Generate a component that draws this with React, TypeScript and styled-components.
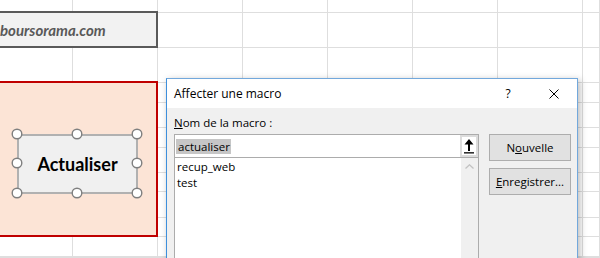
import styled, { createGlobalStyle } from 'styled-components';

const GlobalStyle = createGlobalStyle`
  html, body {
    margin: 0;
    padding: 0;
    background: #ffffff;
    overflow: hidden;
  }
  * {
    box-sizing: border-box;
  }
`;

const colWidths = [73, 85, 85, 85, 85, 85, 85, 17];
const rowHeights = [13, 35, 35, 20, 25, 20, 25, 19, 26, 19, 20, 1];

const Sheet = styled.div`
  position: relative;
  width: 600px;
  height: 258px;
  overflow: hidden;
  display: grid;
  grid-template-columns: ${colWidths.map(w => `${w}px`).join(' ')};
  grid-template-rows: ${rowHeights.map(h => `${h}px`).join(' ')};
  background: #ffffff;
`;

const Cell = styled.div`
  border-right: 1px solid #dedede;
  border-bottom: 1px solid #dedede;
`;

const TextBox = styled.div`
  position: absolute;
  left: -4px;
  top: 11px;
  width: 162px;
  height: 37px;
  border: 2px solid #5a5a5a;
  background: #f2f2f2;
  display: flex;
  align-items: center;
  padding: 1px 0 0 2px;
  font-family: Lato, 'Liberation Sans', sans-serif;
  font-weight: 700;
  font-style: italic;
  font-size: 15px;
  color: #595959;
`;

const RedZone = styled.div`
  position: absolute;
  left: -3px;
  top: 81px;
  width: 161px;
  height: 156px;
  border: 2px solid #c00000;
  background: #fce4d6;
`;

const MacroButton = styled.div`
  position: absolute;
  left: 17px;
  top: 134px;
  width: 121px;
  height: 60px;
  border: 2px solid #b1b1b1;
  background: #f0f0f0;
  display: flex;
  align-items: center;
  justify-content: center;
  font-family: Lato, 'Liberation Sans', sans-serif;
  font-weight: 700;
  font-size: 18px;
  color: #000000;
`;

const Handles = styled.svg`
  position: absolute;
  left: 10px;
  top: 127px;
  overflow: visible;
`;

const Dialog = styled.div`
  position: absolute;
  left: 166px;
  top: 78px;
  width: 412px;
  height: 200px;
  border: 1px solid #72a8dc;
  border-left-color: #3d8fdc;
  background: #f0f0f0;
  box-shadow: 2px 2px 7px rgba(0, 0, 0, 0.28);
  display: flex;
  flex-direction: column;
  font-family: 'Open Sans', 'Noto Sans', sans-serif;
  font-size: 11.5px;
  color: #000000;
`;

const TitleBar = styled.div`
  height: 29px;
  background: #ffffff;
  display: flex;
  align-items: center;
  padding-left: 7px;
`;

const Title = styled.div`
  flex: 1;
  font-size: 12px;
`;

const TitleButton = styled.div`
  width: 46px;
  height: 29px;
  display: flex;
  align-items: center;
  justify-content: center;
  font-size: 12px;
`;

const Body = styled.div`
  display: flex;
  gap: 10px;
  padding: 7px 6px 0 7px;
`;

const LeftCol = styled.div`
  width: 305px;
  display: flex;
  flex-direction: column;
`;

const Label = styled.div`
  height: 16px;
  line-height: 16px;
  margin-bottom: 3px;
`;

const InputRow = styled.div`
  height: 24px;
  border: 1px solid #acacac;
  background: #ffffff;
  display: flex;
  align-items: center;
`;

const InputText = styled.div`
  flex: 1;
  padding-left: 1px;
`;

const Selected = styled.span`
  display: inline-block;
  background: #c6c6c6;
  line-height: 15px;
  padding: 0 1px 0 2px;
`;

const RefButton = styled.div`
  width: 18px;
  height: 22px;
  border: 2px solid #dcdcdc;
  background: #ffffff;
  display: flex;
  align-items: center;
  justify-content: center;
`;

const ListBox = styled.div`
  height: 120px;
  border: 1px solid #acacac;
  border-top: none;
  background: #ffffff;
  display: flex;
`;

const Items = styled.div`
  flex: 1;
  padding: 1px 0 0 2px;
`;

const Item = styled.div`
  line-height: 16px;
  height: 16px;
`;

const ScrollBar = styled.div`
  width: 17px;
  background: #f0f0f0;
  display: flex;
  justify-content: center;
  padding-top: 6px;
`;

const RightCol = styled.div`
  width: 82px;
  padding-top: 19px;
  display: flex;
  flex-direction: column;
  gap: 7px;
`;

const DlgButton = styled.div`
  height: 27px;
  border: 1px solid #adadad;
  background: #e1e1e1;
  display: flex;
  align-items: center;
  justify-content: center;
`;

const handlePoints = [
  [7, 7], [67, 7], [127, 7],
  [7, 36], [127, 36],
  [7, 66], [67, 66], [127, 66],
];

export default function App() {
  return (
    <>
      <GlobalStyle />
      <Sheet>
        {rowHeights.map((_, r) =>
          colWidths.map((__, c) => <Cell key={`${r}-${c}`} />)
        )}
        <TextBox>boursorama.com</TextBox>
        <RedZone />
        <MacroButton>Actualiser</MacroButton>
        <Handles width="134" height="73" viewBox="0 0 134 73">
          {handlePoints.map(([x, y]) => (
            <circle
              key={`${x}-${y}`}
              cx={x}
              cy={y}
              r="4.8"
              fill="#ffffff"
              stroke="#7f7f7f"
              strokeWidth="1.4"
            />
          ))}
        </Handles>

        <Dialog>
          <TitleBar>
            <Title>Affecter une macro</Title>
            <TitleButton>?</TitleButton>
            <TitleButton>
              <svg width="10" height="10" viewBox="0 0 10 10">
                <path d="M0.5 0.5 L9.5 9.5 M9.5 0.5 L0.5 9.5" stroke="#000" strokeWidth="1" />
              </svg>
            </TitleButton>
          </TitleBar>
          <Body>
            <LeftCol>
              <Label>
                <u>N</u>om de la macro :
              </Label>
              <InputRow>
                <InputText>
                  <Selected>actualiser</Selected>
                </InputText>
                <RefButton>
                  <svg width="12" height="16" viewBox="0 0 12 16">
                    <path d="M6 1 L1.5 6.5 L5 6.5 L5 13 L7 13 L7 6.5 L10.5 6.5 Z" fill="#000" />
                    <rect x="1" y="14.2" width="10" height="1.3" fill="#000" />
                  </svg>
                </RefButton>
              </InputRow>
              <ListBox>
                <Items>
                  <Item>recup_web</Item>
                  <Item>test</Item>
                </Items>
                <ScrollBar>
                  <svg width="9" height="5" viewBox="0 0 9 5">
                    <path d="M0.5 4.5 L4.5 0.8 L8.5 4.5" fill="none" stroke="#c2c2c2" strokeWidth="1.3" />
                  </svg>
                </ScrollBar>
              </ListBox>
            </LeftCol>
            <RightCol>
              <DlgButton>
                N<u>o</u>uvelle
              </DlgButton>
              <DlgButton>
                <u>E</u>nregistrer...
              </DlgButton>
            </RightCol>
          </Body>
        </Dialog>
      </Sheet>
    </>
  );
}
